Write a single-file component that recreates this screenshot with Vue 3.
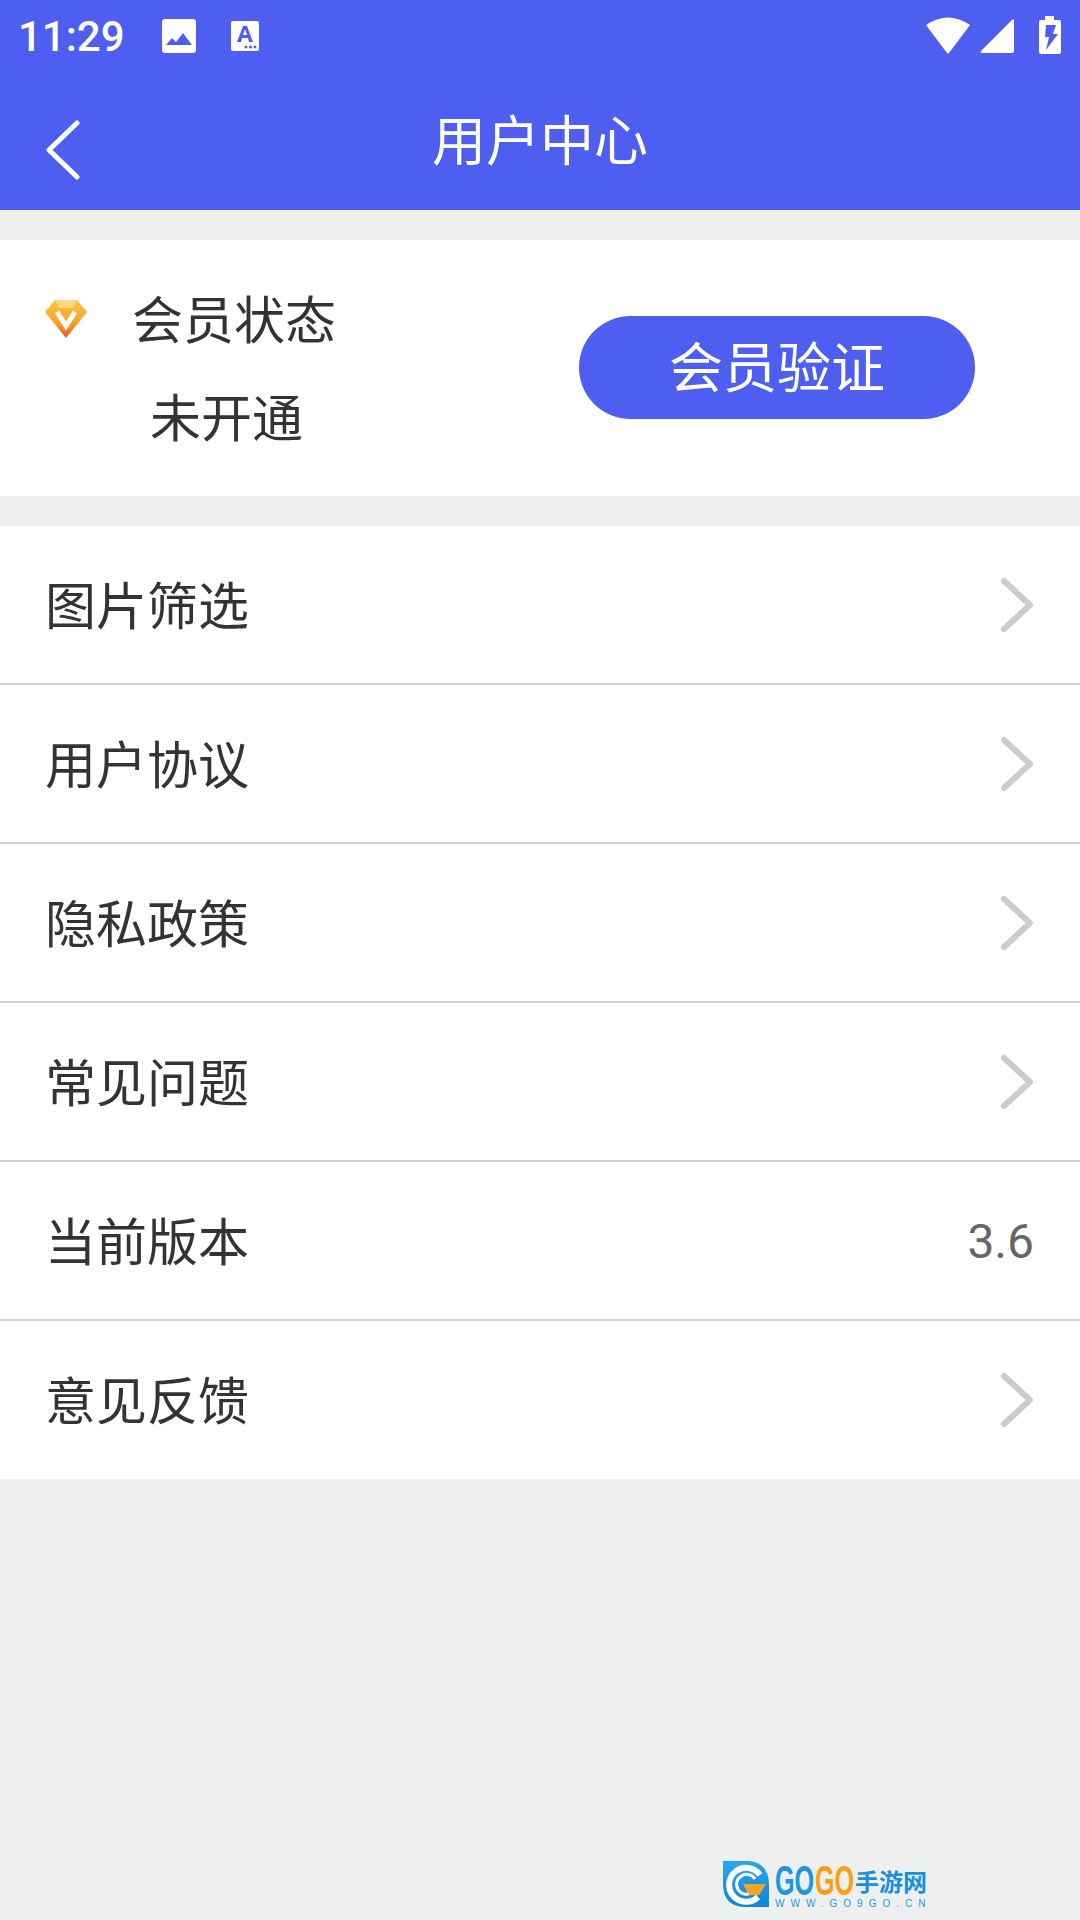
<template>
  <div class="page">
    <header class="top">
      <div class="status">
        <span class="status__time">11:29</span>
        <svg class="status__pic" width="36" height="36" viewBox="0 0 36 36">
          <rect x="1" y="1" width="34" height="34" rx="3" fill="#fff" />
          <path d="M5 27l6-7 4 4 7-9 9 12z" fill="#4d5ef1" />
        </svg>
        <svg class="status__a" width="30" height="32" viewBox="0 0 30 32">
          <rect x="1" y="1" width="28" height="30" rx="2" fill="#fff" />
          <path d="M7 22L13 6h4l6 16h-4l-1-4h-6l-1 4zM13 15h4l-2-6z" fill="#4d5ef1" fill-rule="evenodd" />
          <circle cx="16" cy="27" r="1.5" fill="#4d5ef1" />
          <circle cx="20.500" cy="27" r="1.500" fill="#4d5ef1" />
          <circle cx="25" cy="27" r="1.500" fill="#4d5ef1" />
        </svg>
        <span class="status__space"></span>
        <svg width="48" height="38" viewBox="0 0 46 38">
          <path d="M1 8Q23-7 45 8L24 36a1.300 1.300 0 0 1-2 0z" fill="#fff" />
        </svg>
        <svg class="status__signal" width="36" height="36" viewBox="0 0 36 36">
          <path d="M1 33L32 2q2-2 2 1v30q0 2-2 2H2q-2 0-1-2z" fill="#fff" />
        </svg>
        <svg class="status__battery" width="24" height="40" viewBox="0 0 24 40">
          <path d="M7 1h9v4h5q2 0 2 2v30q0 2-2 2H3q-2 0-2-2V7q0-2 2-2h4z" fill="#fff" />
          <path d="M8 10h10l-3 9h5L8 35l3-13H7z" fill="#4d5ef1" />
        </svg>
      </div>
      <div class="nav">
        <svg class="nav__back" width="36" height="60" viewBox="0 0 36 60">
          <path d="M31 3L3 30l28 27" fill="none" stroke="#fff" stroke-width="5" stroke-linecap="round" stroke-linejoin="round" />
        </svg>
        <h1 class="nav__title">用户中心</h1>
      </div>
    </header>

    <section class="member">
      <div class="member__info">
        <div class="member__state">
          <svg class="member__gem" width="44" height="40" viewBox="0 0 44 40">
            <defs>
              <linearGradient id="gem" x1="0" y1="0" x2="0" y2="1">
                <stop offset="0" stop-color="#fcc548" />
                <stop offset="0.600" stop-color="#fba122" />
                <stop offset="1" stop-color="#f0582c" />
              </linearGradient>
            </defs>
            <path d="M11 1h22l10 12-21 26L1 13z" fill="url(#gem)" />
            <path d="M11 1h22l-4 8H15z" fill="#fdd77f" />
            <path d="M13 13l9 14 9-14" fill="none" stroke="#fff" stroke-width="5" />
          </svg>
          <span>会员状态</span>
        </div>
        <div class="member__value">未开通</div>
      </div>
      <button class="member__btn">会员验证</button>
    </section>

    <ul class="list">
      <li v-for="row in rows" :key="row.label" class="row">
        <span class="row__label">{{ row.label }}</span>
        <span v-if="row.value" class="row__value">{{ row.value }}</span>
        <svg v-else width="34" height="56" viewBox="0 0 34 56">
          <path d="M4 4l26 24L4 52" fill="none" stroke="#ccc" stroke-width="6" stroke-linecap="round" stroke-linejoin="round" />
        </svg>
      </li>
    </ul>

    <div class="mark">
      <svg width="48" height="48" viewBox="0 0 48 48">
        <defs>
          <linearGradient id="drop" x1="0" y1="0" x2="0" y2="1">
            <stop offset="0" stop-color="#2aa8e8" />
            <stop offset="1" stop-color="#0e86d4" />
          </linearGradient>
        </defs>
        <path d="M1 1h26q20 2 20 24v22H24Q1 47 1 24z" fill="url(#drop)" />
        <path d="M38 15A17 17 0 1 0 36 37" fill="none" stroke="#fff" stroke-width="6" />
        <path d="M33 19A10 10 0 1 0 31 32" fill="none" stroke="#fff" stroke-width="3" />
        <path d="M21 24h23l-7 11H27z" fill="#f5a623" />
      </svg>
      <div class="mark__text">
        <div class="mark__name">
          <span class="mark__go mark__blue">GO</span><span class="mark__go mark__orange">GO</span><span class="mark__cn">手游网</span>
        </div>
        <div class="mark__url">WWW.GO9GO.CN</div>
      </div>
    </div>
  </div>
</template>

<script setup>
const rows = [
  { label: "图片筛选" },
  { label: "用户协议" },
  { label: "隐私政策" },
  { label: "常见问题" },
  { label: "当前版本", value: "3.6" },
  { label: "意见反馈" },
];
</script>

<style>
body {
  margin: 0;
  background: #eef0f0;
}
</style>

<style scoped>
.page {
  height: 1920px;
  display: flex;
  flex-direction: column;
  background: #eef0f0;
  font-family: "Noto Sans CJK SC", "Noto Sans", sans-serif;
  color: #333;
  overflow: hidden;
}
.top {
  height: 210px;
  background: #4d5ef1;
  color: #fff;
}
.status {
  height: 72px;
  display: flex;
  align-items: center;
  padding: 0 18px 0 18px;
}
.status__time {
  font-family: Roboto, sans-serif;
  font-size: 42px;
  font-weight: 500;
  width: 143px;
}
.status__pic {
  margin-right: 33px;
}
.status__space {
  flex: 1;
}
.status__signal {
  margin-left: 8px;
}
.status__battery {
  margin-left: 22px;
  margin-top: -2px;
}
.nav {
  height: 138px;
  display: flex;
  align-items: center;
  justify-content: center;
  position: relative;
}
.nav__back {
  position: absolute;
  left: 46px;
  top: 48px;
}
.nav__title {
  margin: 0 0 8px;
  font-size: 54px;
  font-weight: 400;
}
.member {
  height: 256px;
  margin-top: 30px;
  background: #fff;
  display: flex;
  align-items: center;
  padding-left: 44px;
}
.member__info {
  width: 535px;
  font-size: 51px;
  margin-top: -4px;
}
.member__state {
  display: flex;
  align-items: center;
  height: 98px;
}
.member__gem {
  margin: 4px 44px 0 0;
}
.member__value {
  height: 98px;
  line-height: 98px;
  padding-left: 106px;
}
.member__btn {
  width: 396px;
  height: 103px;
  margin-top: -2px;
  border: 0;
  border-radius: 52px;
  background: #4d5ef1;
  color: #fff;
  font: inherit;
  font-size: 54px;
  line-height: 98px;
  padding: 0 0 4px;
}
.list {
  margin: 30px 0 0;
  padding: 0;
  list-style: none;
  background: #fff;
}
.row {
  height: 159px;
  box-sizing: border-box;
  display: flex;
  align-items: center;
  justify-content: space-between;
  padding: 0 46px 0 45px;
  border-bottom: 2px solid #d2d2d2;
  font-size: 51px;
}
.row:last-child {
  height: 158px;
  border-bottom: 0;
}
.row__label {
  margin-top: -4px;
}
.row__value {
  font-family: Roboto, sans-serif;
  font-size: 48px;
  color: #666;
  margin-top: 2px;
}
.mark {
  margin: auto 0 10px 722px;
  display: flex;
  gap: 5px;
  align-items: flex-start;
}
.mark__text {
  width: 152px;
  padding-top: 4px;
}
.mark__name {
  display: flex;
  align-items: center;
  height: 34px;
}
.mark__go {
  width: 40px;
  font-family: "Liberation Sans", sans-serif;
  font-weight: 700;
  font-size: 42px;
  line-height: 34px;
  display: inline-block;
  transform: scaleX(0.6);
  transform-origin: left center;
  white-space: nowrap;
}
.mark__blue {
  color: #1a97e0;
}
.mark__orange {
  color: #f8a015;
}
.mark__cn {
  font-size: 24px;
  font-weight: 700;
  line-height: 34px;
  color: #1a8fdc;
  white-space: nowrap;
}
.mark__url {
  font-family: "Liberation Sans", sans-serif;
  font-size: 10px;
  line-height: 12px;
  letter-spacing: 6px;
  color: #1c9be0;
  white-space: nowrap;
}
</style>
